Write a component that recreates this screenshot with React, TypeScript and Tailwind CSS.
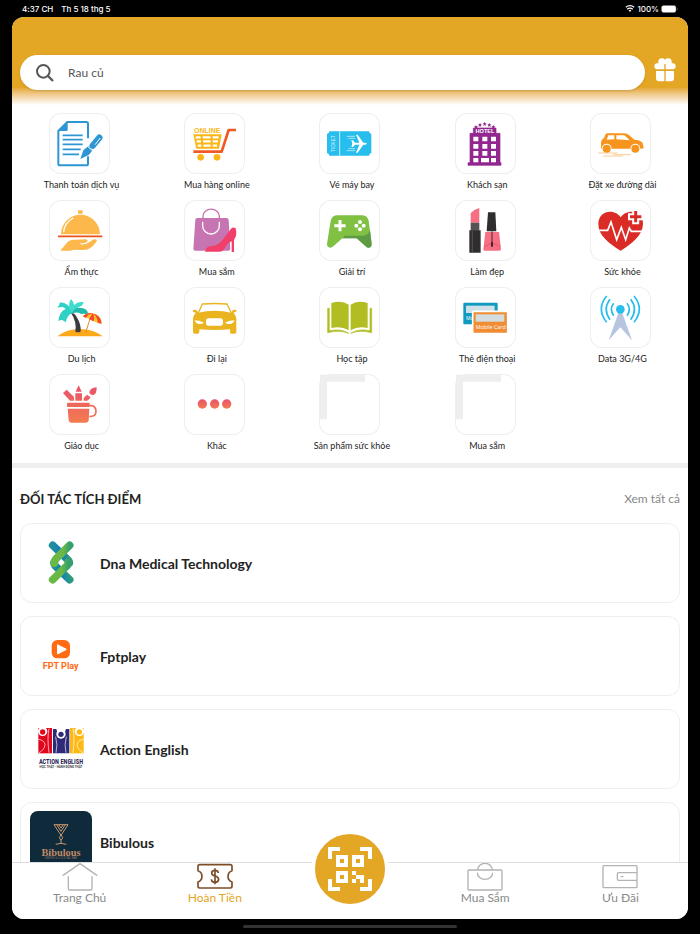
import type { ReactNode } from "react";

const PINK_TO_ORANGE = ["#e8526c", "#f47b50"];

function Tile({ children }: { children?: ReactNode }) {
  return (
    <svg viewBox="0 0 183 183" className="h-full w-full" aria-hidden="true">
      {children}
    </svg>
  );
}

function BillIcon() {
  return (
    <Tile>
      <path
        d="M117 76V32q0-5-5-5H55L28 54v98q0 5 5 5h79q5 0 5-5v-22"
        fill="none"
        stroke="#2e96d3"
        strokeWidth="6"
      />
      <path d="M26 54 56 25v25q0 4-4 4z" fill="#2e96d3" />
      <path
        d="M41 67h60M41 80h60M41 94h60M41 109h54M41 124h49"
        stroke="#2e96d3"
        strokeWidth="5"
      />
      <path d="m94 138 9-26 15-13 13 13-12 14z" fill="#2e96d3" />
      <path d="m131 98 20-24" stroke="#2e96d3" strokeWidth="19" strokeLinecap="round" />
      <path d="m139 94 14-18" stroke="#fff" strokeWidth="3" strokeLinecap="round" />
      <path d="m115 99 17 16" stroke="#fff" strokeWidth="3" />
    </Tile>
  );
}

function CartIcon() {
  return (
    <Tile>
      <text
        x="70"
        y="61"
        textAnchor="middle"
        fill="#fbb615"
        className="font-['Liberation_Sans'] text-[21px] font-bold"
      >
        ONLINE
      </text>
      <path d="M28 64h85l-8 43H37z" fill="#fbb615" />
      <path
        d="M35 73h15M56 73h24M86 73h18M38 85h13M57 85h23M86 85h16M41 98h11M58 98h22M86 98h13"
        stroke="#fff"
        strokeWidth="7"
      />
      <path
        d="M156 51h-22l-21 65H28"
        fill="none"
        stroke="#f15a24"
        strokeWidth="8"
        strokeLinejoin="round"
      />
      <circle cx="50" cy="133" r="10" fill="#fbb615" />
      <circle cx="99" cy="133" r="10" fill="#fbb615" />
    </Tile>
  );
}

function PlaneTicketIcon() {
  return (
    <Tile>
      <path
        d="M31 55h119q1 7 7 8v57q-6 1-7 8H31q-1-7-7-8V63q6-1 7-8z"
        fill="#27bdec"
      />
      <path d="M62 55v73" stroke="#c9effb" strokeWidth="3" />
      <text
        x="0"
        y="0"
        transform="translate(49 92) rotate(-90)"
        textAnchor="middle"
        fill="#d9f4fc"
        className="font-['Liberation_Sans'] text-[14px]"
      >
        TICKET
      </text>
      <path
        d="M97 82h5l6 7h13l-10-24h5l17 24h5q6 1 6 3t-6 3h-5l-17 24h-5l10-24h-13l-6 7h-5l3-10z"
        fill="#fff"
      />
      <path d="M83 70h25M88 76h20M83 113h25M88 107h20" stroke="#e2f7fd" strokeWidth="2" />
    </Tile>
  );
}

function HotelIcon() {
  const stars = [
    [63, 42],
    [75, 36],
    [89, 33],
    [103, 36],
    [115, 42],
  ];
  return (
    <Tile>
      {stars.map(([x, y]) => (
        <path
          key={x}
          transform={`translate(${x} ${y})`}
          d="m0-6 2 4h4L3 1l1 5-4-3-4 3 1-5-3-3h4z"
          fill="#92278f"
        />
      ))}
      <path
        d="M55 45h68v16h12v88h3v8H39v-8h6V61h10z"
        fill="#92278f"
        stroke="#92278f"
        strokeWidth="2"
        strokeLinejoin="round"
      />
      <text
        x="90"
        y="60"
        textAnchor="middle"
        fill="#fff"
        className="font-['Liberation_Sans'] text-[17px] font-bold"
      >
        HOTEL
      </text>
      <path
        d="M55 71h15v14H55zM82 71h15v14H82zM108 71h15v14h-15zM55 93h15v14H55zM82 93h15v14H82zM108 93h15v14h-15zM55 114h15v14H55zM82 114h15v14H82zM108 114h15v14h-15zM55 135h15v13H55zM78 135h24v13H78zM108 135h15v13h-15z"
        fill="#fff"
      />
    </Tile>
  );
}

function TaxiIcon() {
  return (
    <Tile>
      <path
        d="M33 105V88q2-10 9-13l5-12q1-2 6-2h50q8 0 14 5l16 14q19 1 25 10l3 14q0 3-7 3H36q-3 1-3-2z"
        fill="#f7941d"
      />
      <path d="m55 67-5 13 23-1V67zM79 67h21q5 0 8 4l11 11-40-3z" fill="#fff" />
      <circle cx="50" cy="107" r="15" fill="#fff" />
      <circle cx="136" cy="107" r="15" fill="#fff" />
      <circle cx="50" cy="107" r="12" fill="#f7941d" />
      <circle cx="136" cy="107" r="12" fill="#f7941d" />
      <path d="M24 120h58M70 125h52M40 129h58" stroke="#f9b05a" strokeWidth="2" />
    </Tile>
  );
}

function FoodIcon() {
  return (
    <Tile>
      <path d="M36 103a58 58 0 0 1 117 0z" fill="#fdb84b" />
      <path d="M87 41v-7q0-3 3-3h8q3 0 3 3v7z" fill="#fdb84b" />
      <path d="M44 97q1-28 29-43" fill="none" stroke="#fff" strokeWidth="4" />
      <path d="M27 109h133" stroke="#e9531d" strokeWidth="5" />
      <path
        d="m34 152 17-21q9-12 24-12l36-1q7 2 4 7-4 4-18 5l-6 2q14 4 27-4l16-10q9-2 10 4-12 18-24 24-8 5-24 4l-22-1-10 3z"
        fill="#fdb84b"
      />
    </Tile>
  );
}

function ShoppingIcon() {
  return (
    <Tile>
      <path
        d="M34 60q0-6 6-6h88q5 0 6 6l5 86q0 6-6 6H34q-6 0-6-6z"
        fill="#c774b2"
      />
      <path d="M57 55v-6a24 21 0 0 1 49 0v6" fill="none" stroke="#c774b2" strokeWidth="4" />
      <path d="M56 65v12a25 25 0 0 0 50 0V65" fill="none" stroke="#fff" strokeWidth="4" />
      <path
        d="M63 155q3-16 19-17 18 0 30-14 16-20 29-38 7-6 14-1 3 8 1 23l-6 12v36h-7v-32q-13 5-20 19-6 12-17 12z"
        fill="#f0406a"
      />
    </Tile>
  );
}

function GamepadIcon() {
  return (
    <Tile>
      <path
        d="m24 132 11-70q4-16 21-16h72q17 0 21 16l9 70q0 11-10 11-5 0-8-4l-27-24H70l-27 24q-4 4-9 4-10-1-10-11z"
        fill="#80c043"
      />
      <path
        d="M78 107h52q20-1 23-18l5 43q0 11-10 11-5 0-8-4l-27-24H70z"
        fill="#5f9a45"
      />
      <path d="M63 60v34M46 77h34" stroke="#fff" strokeWidth="9" />
      <circle cx="123" cy="66" r="6" fill="#fff" />
      <circle cx="123" cy="88" r="6" fill="#fff" />
      <circle cx="112" cy="77" r="6" fill="#fff" />
      <circle cx="134" cy="77" r="6" fill="#fff" />
    </Tile>
  );
}

function BeautyIcon() {
  return (
    <Tile>
      <path d="M47 68V39q12-12 26-15v44z" fill="#f66f83" />
      <path d="M47 68h26v24H47z" fill="#565354" />
      <path d="M43 91h34v67H43z" fill="#2f2d2e" />
      <path d="M52 94v62" stroke="#4d4b4c" strokeWidth="4" />
      <path d="M99 37h22l3 57H95z" fill="#2f2d2e" />
      <path d="M91 96h41l6 52q0 4-5 4H89q-5 0-4-4z" fill="#f66f83" />
      <path d="m88 140 15-8h17l16 8" fill="none" stroke="#e0576f" strokeWidth="3" />
      <path d="M111 94v40" stroke="#4a2330" strokeWidth="3" />
      <path d="M111 126v14" stroke="#4a2330" strokeWidth="6" />
    </Tile>
  );
}

function HealthIcon() {
  return (
    <Tile>
      <path
        d="M92 152C56 130 25 106 25 72c0-25 18-37 34-37 16 0 27 7 33 17 6-10 17-17 34-17 19 0 34 14 33 37-1 34-32 58-67 80z"
        fill="#da2b27"
      />
      <path
        d="M28 91h25l10-25 17 53 14-37 13 37 11-35 6 10h32"
        fill="none"
        stroke="#fff"
        strokeWidth="5"
      />
      <path d="M137 27v46M114 50h46" stroke="#fff" strokeWidth="21" />
      <path d="M137 33v34M120 50h34" stroke="#da2b27" strokeWidth="9" />
    </Tile>
  );
}

function TravelIcon() {
  return (
    <Tile>
      <path d="M25 148q28-22 67-22t70 22z" fill="#fba919" />
      <path d="M66 78q10-2 17 12 14 22 12 44-8 3-16 0 5-30-13-56z" fill="#3c3c3e" />
      <path
        d="M70 78Q60 46 33 46q-1 9-8 16 20-5 25 4-18 6-22 36 8-5 14-2 3 5 9 4 2-18 19-26z"
        fill="#2fd0c5"
      />
      <path
        d="M69 78Q53 54 66 36q7 5 10 19 7-12 28-10-1 7-7 12-17 5-27 23z"
        fill="#3edccf"
      />
      <path d="M69 79q8-23 33-15 16 5 15 18-9 2-13-3-2 4-9 1-9-6-22-2z" fill="#1fb9ae" />
      <path d="m128 80-18 57" stroke="#e8863b" strokeWidth="3" />
      <path d="M101 88q14-13 31-9 26 7 26 31l-12-2-14-6-12-7z" fill="#fdc52d" />
      <path
        d="M101 88q14-13 30-9-16 3-20 14zM131 79q-6 8-11 18l14 6q4-14-3-24zM131 79q25 7 27 31l-12-3q-1-19-15-28z"
        fill="#f14c2e"
      />
    </Tile>
  );
}

function CarIcon() {
  return (
    <Tile>
      <path
        d="m42 80 13-29q37-3 74 0l14 29"
        fill="none"
        stroke="#e9b41f"
        strokeWidth="4"
        strokeLinejoin="round"
      />
      <path
        d="M26 71q1-3 7-3 7 0 9 9 50-12 100 0 2-9 9-9 6 0 7 3-1 5-10 6 10 9 9 25v33q0 5-5 5h-9q-5 0-5-5v-8q-46 4-92 0v8q0 5-5 5h-9q-5 0-5-5v-33q-1-16 9-25-10-1-10-6z"
        fill="#e9b41f"
      />
      <path d="M32 100q14 0 28 7-6 5-16 4-9-1-12-11zM151 100q-14 0-28 7 6 5 16 4 9-1 12-11z" fill="#fff" />
      <rect x="66" y="94" width="51" height="22" rx="8" fill="#fff" />
    </Tile>
  );
}

function BookIcon() {
  return (
    <Tile>
      <path
        d="M37 48q31-10 52 5v77q-22-14-52-7zM146 48q-31-10-51 5v77q22-14 51-7z"
        fill="#b1bd21"
      />
      <path
        d="M31 64h-5v73q36-9 63 2-22-15-58-8zM153 64h5v73q-36-9-63 2 22-15 58-8z"
        fill="#b1bd21"
        stroke="#b1bd21"
        strokeWidth="2"
      />
    </Tile>
  );
}

function PhoneCardIcon() {
  return (
    <Tile>
      <rect x="25" y="47" width="103" height="65" rx="3" fill="#0e9bbf" />
      <rect x="33" y="56" width="86" height="22" fill="#cfe0e6" />
      <text x="33" y="99" fill="#fff" className="font-['Open_Sans'] text-[15px]">
        Mo
      </text>
      <rect x="53" y="73" width="105" height="67" rx="3" fill="#f08c33" stroke="#fff" strokeWidth="5" />
      <rect x="62" y="82" width="86" height="22" fill="#d3dde0" />
      <text x="62" y="126" fill="#fff" className="font-['Open_Sans'] text-[16px]">
        Mobile Card
      </text>
    </Tile>
  );
}

function DataIcon() {
  return (
    <Tile>
      <path d="m86 76-30 84 35-39 35 39-30-84z" fill="#b7c5e1" />
      <circle cx="91" cy="67" r="13" fill="#27bdec" />
      <path
        d="M71 49q-14 18 0 37M60 37q-23 30 0 61M50 27q-32 39 0 79M111 49q14 18 0 37M122 37q23 30 0 61M132 27q32 39 0 79"
        fill="none"
        stroke="#27bdec"
        strokeWidth="5"
      />
    </Tile>
  );
}

function EducationIcon() {
  return (
    <Tile>
      <defs>
        <linearGradient id="cup" gradientUnits="userSpaceOnUse" x1="0" y1="35" x2="0" y2="145">
          <stop stopColor={PINK_TO_ORANGE[0]} />
          <stop offset="1" stopColor={PINK_TO_ORANGE[1]} />
        </linearGradient>
      </defs>
      <g fill="url(#cup)">
        <rect x="54" y="86" width="68" height="13" rx="2" />
        <path d="M56 104h65l-2 35q-1 7-8 7H66q-6 0-7-7z" />
        <path d="m42 57 11-10 22 22v11H63z" />
        <path d="m89 34 9 19H80zM79 58h20v22H79z" />
        <path d="m104 72 10-10 10 7q1 4-9 11h-11zM121 57q0-15 22-17 1 20-11 24-7-1-11-7z" />
      </g>
      <path
        d="M121 95h7q13 3 13 17 0 16-20 16"
        fill="none"
        stroke="url(#cup)"
        strokeWidth="5"
      />
    </Tile>
  );
}

function MoreIcon() {
  return (
    <Tile>
      <defs>
        <linearGradient id="dots" x1="0" y1="0" x2="0" y2="1">
          <stop stopColor={PINK_TO_ORANGE[0]} />
          <stop offset="1" stopColor={PINK_TO_ORANGE[1]} />
        </linearGradient>
      </defs>
      {[55, 92, 128].map((x) => (
        <circle key={x} cx={x} cy="90" r="14" fill="url(#dots)" />
      ))}
    </Tile>
  );
}

function EmptyIcon() {
  return (
    <Tile>
      <path d="M3 2h135v21H24v113H3z" fill="#eeeeee" />
    </Tile>
  );
}

const SERVICES = [
  { label: "Thanh toán dịch vụ", icon: <BillIcon /> },
  { label: "Mua hàng online", icon: <CartIcon /> },
  { label: "Vé máy bay", icon: <PlaneTicketIcon /> },
  { label: "Khách sạn", icon: <HotelIcon /> },
  { label: "Đặt xe đường dài", icon: <TaxiIcon /> },
  { label: "Ẩm thực", icon: <FoodIcon /> },
  { label: "Mua sắm", icon: <ShoppingIcon /> },
  { label: "Giải trí", icon: <GamepadIcon /> },
  { label: "Làm đẹp", icon: <BeautyIcon /> },
  { label: "Sức khỏe", icon: <HealthIcon /> },
  { label: "Du lịch", icon: <TravelIcon /> },
  { label: "Đi lại", icon: <CarIcon /> },
  { label: "Học tập", icon: <BookIcon /> },
  { label: "Thẻ điện thoại", icon: <PhoneCardIcon /> },
  { label: "Data 3G/4G", icon: <DataIcon /> },
  { label: "Giáo dục", icon: <EducationIcon /> },
  { label: "Khác", icon: <MoreIcon /> },
  { label: "Sản phẩm sức khỏe", icon: <EmptyIcon /> },
  { label: "Mua sắm", icon: <EmptyIcon /> },
];

function Logo({ children }: { children: ReactNode }) {
  return (
    <svg viewBox="0 0 186 186" className="h-[62px] w-[62px] shrink-0" aria-hidden="true">
      {children}
    </svg>
  );
}

function DnaLogo() {
  return (
    <Logo>
      <defs>
        <linearGradient id="dna-blue" x1="0" y1="0" x2="1" y2="0">
          <stop stopColor="#1f8f9c" />
          <stop offset="0.5" stopColor="#0d7fc0" />
          <stop offset="1" stopColor="#2b9a80" />
        </linearGradient>
        <linearGradient id="dna-green" x1="0" y1="0" x2="1" y2="0">
          <stop offset="0.6" stopColor="#6ab845" />
          <stop offset="1" stopColor="#35a06c" />
        </linearGradient>
      </defs>
      <g fill="none" strokeWidth="23" strokeLinecap="round">
        <path d="m68 40 40 38q10 8 10 14" stroke="url(#dna-blue)" />
        <path d="M72 92q0 6 8 14l39 37" stroke="url(#dna-blue)" />
        <path d="M119 40 82 76q-9 8-9 18" stroke="url(#dna-green)" />
        <path d="M115 90q0 10-9 16l-38 37" stroke="url(#dna-green)" />
      </g>
      <path d="m88 92 6-6 6 6-6 6z" fill="#fff" />
    </Logo>
  );
}

function FptLogo() {
  return (
    <Logo>
      <rect x="65" y="45" width="55" height="55" rx="17" fill="#ff6a13" />
      <path d="m83 60 25 13-25 13z" fill="#fff" stroke="#fff" strokeWidth="4" strokeLinejoin="round" />
      <text
        x="92"
        y="133"
        textAnchor="middle"
        fill="#ff6a13"
        className="font-['Roboto'] text-[27px] font-bold"
      >
        FPT Play
      </text>
    </Logo>
  );
}

function ActionEnglishLogo() {
  return (
    <Logo>
      <path d="M25 30h41v76H25z" fill="#e1061c" />
      <path d="M69 33h10l6 20h16l7-20h10v73H69z" fill="#2e2a78" />
      <path d="M120 30h41v76h-41z" fill="#fdb913" />
      <circle cx="38" cy="40" r="14" fill="#fff" />
      <circle cx="93" cy="48" r="14" fill="#fff" />
      <circle cx="148" cy="40" r="14" fill="#fff" />
      <circle cx="38" cy="42" r="8" fill="#e1061c" />
      <circle cx="93" cy="49" r="8" fill="#2e2a78" />
      <circle cx="148" cy="42" r="8" fill="#fdb913" />
      <path
        d="M25 64q18 2 20 16-2 16-18 24M57 32q-6 28 0 72M161 64q-18 2-20 16 2 16 18 24M129 32q6 28 0 72M77 56q7 24 1 48M109 56q-7 24-1 48"
        fill="none"
        stroke="#fff"
        strokeWidth="2"
      />
      <text
        x="93"
        y="137"
        textAnchor="middle"
        fill="#2e2a58"
        className="font-['Liberation_Sans_Narrow','Roboto_Condensed','Roboto'] text-[19px] font-bold"
      >
        ACTION ENGLISH
      </text>
      <text
        x="93"
        y="151"
        textAnchor="middle"
        fill="#444"
        className="font-['Roboto'] text-[9px] font-bold"
      >
        HỌC THẬT - HÀNH ĐỘNG THẬT
      </text>
    </Logo>
  );
}

function BibulousLogo() {
  return (
    <Logo>
      <rect width="186" height="186" rx="24" fill="#0f2a3b" />
      <g fill="none" stroke="#c9966f" strokeWidth="3">
        <path d="M72 41h42L93 73zM80 41l13 20 13-20M86 41l7 10 7-10" />
        <path d="m93 71 5 9-5 9-5-9zM93 89v10M77 100q16-6 32 0" />
      </g>
      <text
        x="93"
        y="136"
        textAnchor="middle"
        fill="#c08a68"
        className="font-['Liberation_Serif'] text-[31px] font-bold"
      >
        Bibulous
      </text>
      <text
        x="93"
        y="145"
        textAnchor="middle"
        fill="#8b7568"
        className="font-['Liberation_Sans'] text-[8px]"
      >
        DRINKS &amp; COCKTAIL BAR
      </text>
    </Logo>
  );
}

const PARTNERS = [
  { name: "Dna Medical Technology", logo: <DnaLogo /> },
  { name: "Fptplay", logo: <FptLogo /> },
  { name: "Action English", logo: <ActionEnglishLogo /> },
  { name: "Bibulous", logo: <BibulousLogo /> },
];

function StatusBar() {
  return (
    <div className="flex h-[17px] shrink-0 items-center justify-between pr-[22px] pl-[22px] font-['Inter',sans-serif] text-[8px] font-medium text-white">
      <div className="flex gap-2">
        <span>4:37 CH</span>
        <span>Th 5 18 thg 5</span>
      </div>
      <div className="flex items-center gap-[2px]">
        <svg viewBox="0 0 20 15" className="h-[7px] w-[10px]" aria-hidden="true">
          <path d="M1 5q9-7 18 0M4 9q6-5 12 0" fill="none" stroke="#fff" strokeWidth="2.5" />
          <path d="M7 11q3-2 6 0l-3 4z" fill="#fff" />
        </svg>
        <span>100%</span>
        <svg viewBox="0 0 34 16" className="h-[8px] w-[17px]" aria-hidden="true">
          <rect x="1" y="1" width="29" height="14" rx="4" fill="#fff" stroke="#777" strokeWidth="1" />
          <path d="M32 5q2 3 0 6z" fill="#999" />
        </svg>
      </div>
    </div>
  );
}

function SearchHeader() {
  return (
    <header className="flex h-[88px] shrink-0 items-start gap-[9px] bg-linear-to-b from-[#e4a625] from-80% to-white pt-[38px] pr-3 pl-2">
      <label className="flex h-[35px] flex-1 items-center gap-[14px] rounded-full bg-white pl-4 shadow-sm">
        <svg viewBox="0 0 54 54" className="h-[18px] w-[18px]" aria-hidden="true">
          <circle cx="22" cy="22" r="19" fill="none" stroke="#555" strokeWidth="6" />
          <path d="m36 36 15 15" stroke="#555" strokeWidth="7" />
        </svg>
        <input
          type="search"
          aria-label="Tìm kiếm"
          defaultValue="Rau củ"
          className="min-w-0 flex-1 text-[12px] text-[#555] outline-none"
        />
      </label>
      <button type="button" aria-label="Quà tặng" className="pt-[3px]">
        <svg viewBox="0 0 66 72" className="h-6 w-[22px]" aria-hidden="true">
          <path
            d="M9 16h4Q11 1 24 1q6 0 9 4 3-4 9-4 13 0 11 15h4q8 1 8 9t-8 9H35V18h-4v16H9q-8-1-8-9t8-9z"
            fill="#fff"
          />
          <path d="M6 39h25v31H15q-9 0-9-9zM35 39h25v22q0 9-9 9H35z" fill="#fff" />
        </svg>
      </button>
    </header>
  );
}

function ScanIcon() {
  return (
    <svg viewBox="0 0 11 11" className="h-11 w-11" fill="#fff" fillRule="evenodd" aria-hidden="true">
      <path d="M0 0h3v1H1v2H0zM8 0h3v3h-1V1H8zM0 8h1v2h2v1H0zM10 8h1v3H8v-1h2z" />
      <path d="M2 2h3v3H2zm1 1v1h1V3zM6 2h3v3H6zm1 1v1h1V3zM2 6h3v3H2zm1 1v1h1V7z" />
      <path d="M6 6h1v1h2v2H8V8H7V7H6zM6 8h1v1H6z" />
    </svg>
  );
}

type NavItemProps = {
  label: string;
  active?: boolean;
  children: ReactNode;
};

function NavItem({ label, active = false, children }: NavItemProps) {
  return (
    <a
      href="#"
      className={
        active
          ? "flex flex-col items-center text-[12px] leading-[14px] text-[#e4a625]"
          : "flex flex-col items-center text-[12px] leading-[14px] text-[#8a8a8a]"
      }
    >
      <svg
        viewBox="0 0 108 84"
        className="h-7 w-9"
        fill="none"
        stroke={active ? "#7d4d27" : "#b3b3b3"}
        strokeWidth={active ? 5 : 4}
        strokeLinejoin="round"
        aria-hidden="true"
      >
        {children}
      </svg>
      {label}
    </a>
  );
}

function BottomNav() {
  return (
    <nav className="grid h-[57px] shrink-0 grid-cols-5 border-t border-[#dedede] bg-white">
      <NavItem label="Trang Chủ">
        <path d="M2 38 54 2l52 36M19 40v37q0 4 4 4h63q4 0 4-4V40" />
      </NavItem>
      <NavItem label="Hoàn Tiền" active>
        <path d="M8 5h92q5 0 5 5v13q-12 4-12 17t12 17v13q0 5-5 5H8q-5 0-5-5V57q12-4 12-17T3 23V10q0-5 5-5z" />
        <path d="M64 30q-1-8-10-8-10 0-10 8 0 7 10 9t11 10q-1 9-11 9t-11-9M54 16v48" />
      </NavItem>
      <div className="relative">
        <button
          type="button"
          aria-label="Quét mã QR"
          className="absolute -top-[33px] left-1/2 flex h-[78px] w-[78px] -translate-x-1/2 items-center justify-center rounded-full border-4 border-white bg-[#e4a625]"
        >
          <ScanIcon />
        </button>
      </div>
      <NavItem label="Mua Sắm">
        <path d="M6 21h96q3 0 3 3v54q0 3-3 3H6q-3 0-3-3V24q0-3 3-3zM32 21a22 20 0 0 1 44 0M31 29a23 20 0 0 0 46 0" />
      </NavItem>
      <NavItem label="Ưu Đãi">
        <path d="M6 8h96q3 0 3 3v60q0 3-3 3H6q-3 0-3-3V11q0-3 3-3zM105 29H50q-4 0-4 4v14q0 5 4 5h55M56 41h8" />
      </NavItem>
    </nav>
  );
}

export default function App() {
  return (
    <div className="flex h-screen flex-col bg-black font-['Lato','Open_Sans',sans-serif] [font-variant-ligatures:none]">
      <StatusBar />
      <div className="mx-3 flex min-h-0 flex-1 flex-col overflow-hidden rounded-xl bg-white">
        <SearchHeader />
        <main className="min-h-0 flex-1 overflow-y-auto [scrollbar-width:none]">
          <section className="grid grid-cols-5 gap-y-2 pt-2 pb-[10px]">
            {SERVICES.map((service, i) => (
              <button key={i} type="button" className="flex flex-col items-center gap-1">
                <span className="h-[61px] w-[61px] rounded-xl ring-1 ring-[#eeeeee] ring-inset">
                  {service.icon}
                </span>
                <span className="pl-1 text-[9px] leading-[14px] text-[#222]">
                  {service.label}
                </span>
              </button>
            ))}
          </section>

          <section className="border-t-[5px] border-[#eeeeee] px-2">
            <div className="flex items-center justify-between pt-[19px] pb-3">
              <h2 className="text-[13px] leading-6 font-bold text-[#222]">
                ĐỐI TÁC TÍCH ĐIỂM
              </h2>
              <a href="#" className="text-[12px] text-[#888]">
                Xem tất cả
              </a>
            </div>
            <ul className="flex flex-col gap-[13px]">
              {PARTNERS.map((partner) => (
                <li key={partner.name}>
                  <a
                    href="#"
                    className="flex h-20 items-center gap-2 rounded-xl border border-[#eeeeee] px-[9px]"
                  >
                    {partner.logo}
                    <span className="text-[14px] font-bold text-[#222]">{partner.name}</span>
                  </a>
                </li>
              ))}
            </ul>
          </section>
        </main>
        <BottomNav />
      </div>
      <div className="flex h-[15px] shrink-0 items-center justify-center">
        <div className="h-[3px] w-[214px] rounded-full bg-[#333]" />
      </div>
    </div>
  );
}
